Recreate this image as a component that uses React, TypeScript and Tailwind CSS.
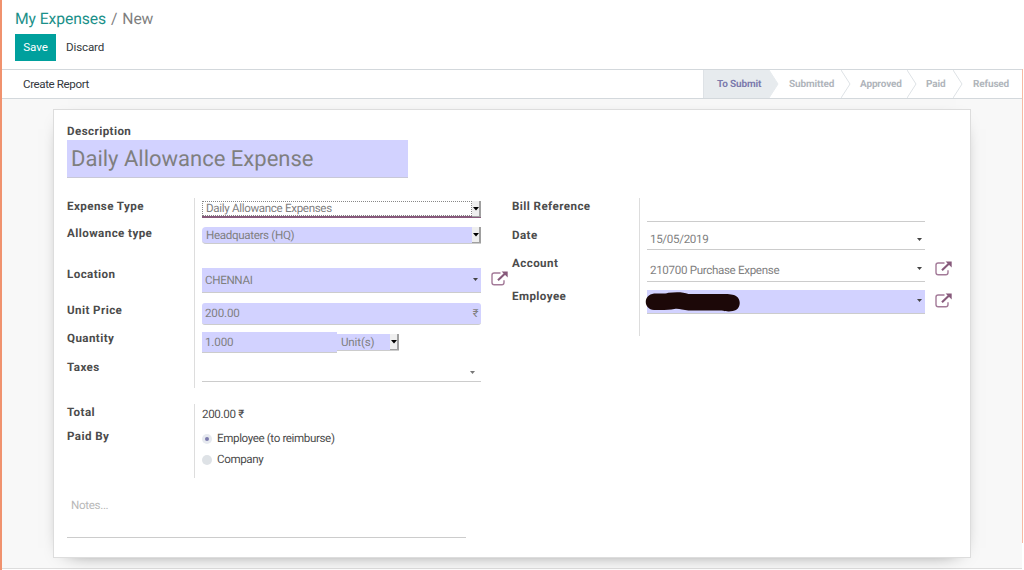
import clsx from 'clsx';
import type { ReactNode } from 'react';

const STEPS = [
  { label: 'To Submit', width: 'w-[65px] pl-[13px]', active: true },
  { label: 'Submitted', width: 'w-[72px] pl-[20px]' },
  { label: 'Approved', width: 'w-[66px] pl-[19px]' },
  { label: 'Paid', width: 'w-[46px] pl-[19px]' },
  { label: 'Refused', width: 'w-[69px] pl-[20px]' },
];

function StatusBar() {
  return (
    <div className="flex h-[28px] border-l border-[#dee2e6]">
      {STEPS.map((step, index) => (
        <div
          key={step.label}
          className={clsx(
            'relative flex items-center pt-px text-[10px] font-bold tracking-[-0.15px] whitespace-nowrap',
            step.width,
            step.active ? 'bg-[#e7ebee] text-[#7c7bad]' : 'text-[#b0b5bb]',
          )}
        >
          {index > 0 && (
            <svg className="absolute top-0 left-0" width="10" height="28" viewBox="0 0 10 28">
              <path d="M0 0L9 14L0 28" fill={index === 1 ? '#e7ebee' : 'none'} stroke={index === 1 ? '#e7ebee' : '#dee2e6'} />
            </svg>
          )}
          {step.label}
        </div>
      ))}
    </div>
  );
}

function Caret({ className }: { className?: string }) {
  return (
    <svg className={clsx('shrink-0', className)} width="5" height="3" viewBox="0 0 5 3">
      <path d="M0 0H5L2.5 3Z" fill="currentColor" />
    </svg>
  );
}

function SelectArrow() {
  return (
    <div className="flex h-[16px] w-[9px] shrink-0 items-center justify-center border-r-2 border-b border-[#a0a0a0] bg-[#efefef]">
      <svg className="shrink-0" width="6" height="4" viewBox="0 0 6 4">
        <path d="M0 0H6L3 3.6Z" fill="#000" />
      </svg>
    </div>
  );
}

function ExternalLink({ className }: { className?: string }) {
  return (
    <svg className={clsx('shrink-0', className)} width="17" height="15" viewBox="0 0 17 15" fill="none">
      <path d="M9.5 2H3.2C1.8 2 1 2.8 1 4V11.5C1 12.9 1.8 13.7 3.2 13.7H10.8C12.2 13.7 13 12.9 13 11.5V9.2" stroke="#a37a98" strokeWidth="1.4" />
      <path d="M7 9.2L13.8 2.8" stroke="#875a7b" strokeWidth="2.1" />
      <path d="M10.6 0.4H16.7V6.5Z" fill="#875a7b" />
    </svg>
  );
}

function Label({ children }: { children: ReactNode }) {
  return <div className="h-4 text-[11.6px] leading-[15px] font-bold tracking-[0.42px] text-[#4c4c4c]">{children}</div>;
}

function Row({ label, height, children }: { label: string; height: string; children?: ReactNode }) {
  return (
    <div className={clsx('flex', height)}>
      <div className="w-[128px] shrink-0 border-r border-[#ddd] pt-px">
        <Label>{label}</Label>
      </div>
      <div className="flex items-start pl-[7px]">{children}</div>
    </div>
  );
}

function LeftGroup() {
  return (
    <div className="w-[445px]">
      <Row label="Expense Type" height="h-[27px]">
        <div className="mt-[3px] flex h-[17px] w-[279px] border-b-2 border-b-[#875a7b]">
          <div className="h-[15px] grow border border-dotted border-[#888] pl-[3px] leading-[13px]">Daily Allowance Expenses</div>
          <SelectArrow />
        </div>
      </Row>
      <Row label="Allowance type" height="h-[41px]">
        <div className="mt-[2px] flex h-[17px] w-[279px] rounded-l-sm border-b border-[#ccc] bg-[#d2d2ff]">
          <div className="grow pl-1 leading-[17px]">Headquaters (HQ)</div>
          <SelectArrow />
        </div>
      </Row>
      <Row label="Location" height="h-[36px]">
        <div className="mt-[2px] flex h-[25px] w-[279px] items-center justify-between border-b border-[#ccc] bg-[#d2d2ff] pr-[3px] pl-[3px]">
          <span className="pt-px">CHENNAI</span>
          <Caret className="mb-[2px] text-[#444]" />
        </div>
        <ExternalLink className="mt-[5px] ml-[10px]" />
      </Row>
      <Row label="Unit Price" height="h-[28px]">
        <div className="mt-px flex h-[22px] w-[279px] items-center justify-between rounded-[3px] border-b border-[#ccc] bg-[#d2d2ff] pr-[3px] pl-[3px]">
          <span className="leading-[21px] tracking-[-0.15px]">200.00</span>
          <span className="text-[11px] leading-[14px]">₹</span>
        </div>
      </Row>
      <Row label="Quantity" height="h-[29px]">
        <div className="mt-[2px] h-[21px] w-[135px] border-b border-[#ccc] bg-[#d2d2ff] pl-[3px] leading-[21px] tracking-[-0.15px]">1.000</div>
        <div className="mt-[4px] flex h-[17px] w-[62px] border-b border-[#ccc] bg-[#d2d2ff]">
          <div className="grow pl-[4px] leading-[17px] tracking-[-0.15px]">Unit(s)</div>
          <SelectArrow />
        </div>
      </Row>
      <Row label="Taxes" height="h-[29px]">
        <div className="flex h-[23px] w-[279px] items-end justify-end border-b border-[#ccc] pr-[6px] pb-[7px]">
          <Caret className="text-[#777]" />
        </div>
      </Row>
    </div>
  );
}

function RightGroup() {
  return (
    <div className="w-[445px]">
      <Row label="Bill Reference" height="h-[29px]">
        <div className="h-6 w-[278px] border-b border-[#ccc]" />
      </Row>
      <Row label="Date" height="h-[28px]">
        <div className="flex h-[23px] w-[278px] items-end justify-between border-b border-[#ccc] pr-[3px] pl-[3px]">
          <span className="leading-[19px]">15/05/2019</span>
          <Caret className="mb-[8px] text-[#444]" />
        </div>
      </Row>
      <Row label="Account" height="h-[33px]">
        <div className="mt-[3px] flex h-[24px] w-[278px] items-center justify-between border-b border-[#ccc] pr-[3px] pl-[3px]">
          <span className="leading-[20px]">210700 Purchase Expense</span>
          <Caret className="mb-[3px] text-[#444]" />
        </div>
        <ExternalLink className="mt-[6px] ml-[10px]" />
      </Row>
      <Row label="Employee" height="h-[48px]">
        <div className="mt-[2px] flex h-6 w-[278px] items-center justify-between border-b border-[#ccc] bg-[#d2d2ff] pr-[3px]">
          <svg className="-ml-[2px]" width="95" height="20" viewBox="0 0 94 20" preserveAspectRatio="none">
            <path
              d="M9 1.5C15 1.5 20 2 23 0.8C31 0 38 0 43 2H78C83 2 88 2.5 90 4C95 7 95 15 90 18C87 19.8 80 19.7 76 18.5H43C37 18 33 16 29 17C24 18.3 15 18 9 18C-2 17 -2 3 9 1.5Z"
              fill="#1c0808"
            />
          </svg>
          <Caret className="mb-[3px] text-[#444]" />
        </div>
        <ExternalLink className="mt-[5px] ml-[10px]" />
      </Row>
    </div>
  );
}

function Radio({ label, checked }: { label: string; checked?: boolean }) {
  return (
    <div className="flex h-[21px] items-center gap-[5px]">
      <span className={clsx('flex size-[10px] items-center justify-center rounded-full', checked ? 'bg-[#e6e9ef]' : 'bg-[#dee2e6]')}>
        {checked && <span className="size-1 rounded-full bg-[#7c7bad]" />}
      </span>
      <span className="leading-[21px] tracking-[-0.38px]">{label}</span>
    </div>
  );
}

export default function App() {
  return (
    <div
      className="flex h-[570px] w-[1024px] flex-col overflow-hidden border-l-2 border-[#f0926e] bg-white text-[11.6px] tracking-[-0.33px] text-[#7f7f7f]"
      style={{ fontFamily: 'Roboto, "Noto Sans", sans-serif', textRendering: 'geometricPrecision' }}
    >
      <header className="h-[69px] shrink-0 pl-[13px]">
        <div className="flex h-[34px] items-center gap-[5px] pt-[4px] text-[15.7px] tracking-[-0.1px] whitespace-nowrap">
          <span className="text-[#1a9089]">My Expenses</span>
          <span>/</span>
          <span>New</span>
        </div>
        <div className="flex items-center">
          <button className="h-[27px] w-[41px] bg-[#00a09d] leading-[27px] tracking-[-0.1px] text-white">Save</button>
          <button className="ml-[10px] leading-[27px] tracking-[-0.15px] text-[#33383d]">Discard</button>
        </div>
      </header>

      <div className="flex min-h-0 w-[1021px] grow">
        <div className="flex grow flex-col">
          <div className="flex h-[30px] shrink-0 items-center justify-between border-y border-[#d3d8dc] bg-white pl-[21px]">
            <button className="leading-[28px] tracking-[-0.4px] text-[#33383d]">Create Report</button>
            <StatusBar />
          </div>

          <main className="h-[470px] border-b border-[#ddd] bg-[#f8f8f8] pt-[10px] pl-[51px]">
            <section className="h-[449px] w-[918px] border border-[#ddd] bg-white pt-[14px] pl-[13px] shadow-[0_5px_20px_-15px_#000]">
              <Label>Description</Label>
              <div className="h-[38px] w-[341px] border-b border-[#c8c8d8] bg-[#d2d2ff] pl-[4px] text-[22px] leading-[39px] tracking-normal">
                Daily Allowance Expense
              </div>

              <div className="mt-[20px] flex">
                <LeftGroup />
                <RightGroup />
              </div>

              <div className="mt-[16px]">
                <Row label="Total" height="h-[24px]">
                  <span className="mt-[2px] leading-4 text-[#4c4c4c]">200.00 ₹</span>
                </Row>
                <Row label="Paid By" height="h-[50px]">
                  <div className="text-[#4c4c4c]">
                    <Radio label="Employee (to reimburse)" checked />
                    <Radio label="Company" />
                  </div>
                </Row>
              </div>

              <div className="mt-[17px] h-[43px] w-[399px] border-b border-[#ccc] pt-[2px] pl-[4px] leading-4 text-[#b8b8b8]">Notes...</div>
            </section>
          </main>
        </div>
        <div className="h-[474px] w-px bg-[#f8b9a2]" />
      </div>
    </div>
  );
}
